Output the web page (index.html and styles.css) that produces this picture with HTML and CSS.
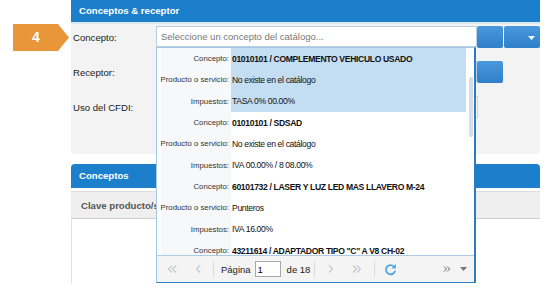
FILE: index.html
```html
<!DOCTYPE html>
<html lang="es">
<head>
  <meta charset="UTF-8" />
  <title>Conceptos y receptor</title>
  <link rel="stylesheet" href="styles.css">
</head>
<body>
  <div class="page">
    <div class="step-col">
      <div class="step">4</div>
    </div>

    <div class="main">
      <section class="panel">
        <div class="panel-head">Conceptos &amp; receptor</div>
        <div class="panel-body">
          <div class="form-row">
            <label class="form-label">Concepto:</label>
            <div class="field">
              <input class="field-input" type="text" placeholder="Seleccione un concepto del catálogo..." />

              <div class="picker">
                <div class="picker-list">
                  <div class="item selected">
                    <div class="lbl">Concepto:</div><div class="val strong">01010101 / COMPLEMENTO VEHICULO USADO</div>
                    <div class="lbl">Producto o servicio:</div><div class="val">No existe en el catálogo</div>
                    <div class="lbl">Impuestos:</div><div class="val">TASA 0% 00.00%</div>
                  </div>
                  <div class="item">
                    <div class="lbl">Concepto:</div><div class="val strong">01010101 / SDSAD</div>
                    <div class="lbl">Producto o servicio:</div><div class="val">No existe en el catálogo</div>
                    <div class="lbl">Impuestos:</div><div class="val">IVA 00.00% / 8 08.00%</div>
                  </div>
                  <div class="item">
                    <div class="lbl">Concepto:</div><div class="val strong">60101732 / LASER Y LUZ LED MAS LLAVERO M-24</div>
                    <div class="lbl">Producto o servicio:</div><div class="val">Punteros</div>
                    <div class="lbl">Impuestos:</div><div class="val">IVA 16.00%</div>
                  </div>
                  <div class="item">
                    <div class="lbl">Concepto:</div><div class="val strong">43211614 / ADAPTADOR TIPO "C" A V8 CH-02</div>
                  </div>
                  <div class="scroll-thumb"></div>
                </div>

                <div class="pager">
                  <span class="pg-btn">
                    <svg width="10" height="10" viewBox="0 0 10 10"><path d="M5 1.5 1.5 5 5 8.5M9 1.5 5.5 5 9 8.5" fill="none" stroke="#bcc6d0" stroke-width="1.1"/></svg>
                  </span>
                  <span class="pg-btn pg-prev">
                    <svg width="10" height="10" viewBox="0 0 10 10"><path d="M7 1.5 3.5 5 7 8.5" fill="none" stroke="#bcc6d0" stroke-width="1.1"/></svg>
                  </span>
                  <span class="pg-sep pg-sep-first"></span>
                  <span class="pg-text">Página</span>
                  <input class="pg-input" type="text" value="1" />
                  <span class="pg-text">de 18</span>
                  <span class="pg-sep pg-sep-mid"></span>
                  <span class="pg-btn pg-next">
                    <svg width="10" height="10" viewBox="0 0 10 10"><path d="M3 1.5 6.5 5 3 8.5" fill="none" stroke="#bcc6d0" stroke-width="1.1"/></svg>
                  </span>
                  <span class="pg-btn pg-last">
                    <svg width="10" height="10" viewBox="0 0 10 10"><path d="M1 1.5 4.5 5 1 8.5M5 1.5 8.5 5 5 8.5" fill="none" stroke="#bcc6d0" stroke-width="1.1"/></svg>
                  </span>
                  <span class="pg-sep pg-sep-end"></span>
                  <span class="pg-btn pg-refresh">
                    <svg width="13" height="13" viewBox="0 0 14 14"><path d="M11.2 4.3A5 5 0 1 0 12 8.2" fill="none" stroke="#4fa3e5" stroke-width="1.9"/><path d="M12.8 1.2v4.6H8.2z" fill="#4fa3e5"/></svg>
                  </span>
                  <span class="pg-more">
                    <svg width="8" height="8" viewBox="0 0 8 8"><path d="M1 1.5 3.5 4 1 6.5M4.2 1.5 6.7 4 4.2 6.5" fill="none" stroke="#666" stroke-width="1"/></svg>
                    <svg width="7" height="4" viewBox="0 0 7 4"><path d="M0 0h7L3.5 4z" fill="#777"/></svg>
                  </span>
                </div>
              </div>
            </div>
            <button class="trigger"></button>
            <button class="trigger trigger-wide">
              <svg width="7" height="4" viewBox="0 0 7 4"><path d="M0 0h7L3.5 4z" fill="#fff"/></svg>
            </button>
          </div>

          <div class="form-row">
            <label class="form-label">Receptor:</label>
            <div class="field"><input class="field-input" type="text" /></div>
            <button class="trigger"></button>
          </div>

          <div class="form-row">
            <label class="form-label">Uso del CFDI:</label>
            <div class="field field-plain"></div>
          </div>
        </div>
      </section>

      <section class="panel panel-grid">
        <div class="panel-head">Conceptos</div>
        <div class="grid-head">
          <span class="col-title">Clave producto/servicio</span>
        </div>
        <div class="grid-body"></div>
      </section>
    </div>
  </div>
</body>
</html>
```

FILE: styles.css
```css
* {
  box-sizing: border-box;
}
body {
  margin: 0;
  background: #fff;
  font-family: "Liberation Sans", Arial, sans-serif;
  color: #222;
}
.page {
  display: flex;
  width: 550px;
  height: 302px;
  overflow: hidden;
}
.step-col {
  width: 71px;
  flex: none;
  padding: 24px 0 0 13px;
}
.step {
  width: 56px;
  height: 27px;
  background: #e9963b;
  clip-path: polygon(0 0, 45px 0, 56px 50%, 45px 100%, 0 100%);
  color: #fff;
  font-weight: bold;
  font-size: 14px;
  line-height: 27px;
  padding-left: 19px;
}
.main {
  width: 469px;
  flex: none;
}
.panel-head {
  background: #1b7fcb;
  color: #fff;
  font-weight: bold;
  font-size: 9.6px;
  height: 22px;
  line-height: 22px;
  padding-left: 8px;
}
.panel-body {
  background: #f3f3f3;
  padding: 2px 0 36px 2px;
  border-top: 2px solid #dde8f2;
  border-radius: 0 0 4px 4px;
}
.form-row {
  display: flex;
  align-items: center;
  height: 22px;
}
.form-row + .form-row {
  margin-top: 13px;
}
.form-label {
  width: 83px;
  font-size: 9.6px;
  color: #222;
}
.field {
  position: relative;
  width: 321px;
  height: 22px;
}
.field-input {
  display: block;
  width: 100%;
  height: 21px;
  margin: 0;
  border: 1px solid #b8cee3;
  background: #fff;
  padding: 0 4px;
  font-family: "Liberation Sans", Arial, sans-serif;
  font-size: 9.5px;
  color: #222;
  outline: none;
}
.field-input::placeholder {
  color: #777;
}
.field-plain {
  width: 322px;
  border: 1px solid #d2d2d2;
  background: #fff;
}
.trigger {
  width: 26px;
  height: 22px;
  padding: 0;
  border: 0;
  border-radius: 2px;
  background: linear-gradient(#4a98dd, #2f80c8);
}
.trigger-wide {
  width: 36px;
  margin-left: 1px;
  text-align: right;
  padding-right: 5px;
}
.trigger-wide svg {
  display: inline-block;
  vertical-align: middle;
}

/* dropdown of the concept combo */
.picker {
  position: absolute;
  left: 0;
  top: 21px;
  z-index: 2;
  width: 320px;
  height: 236px;
  display: flex;
  flex-direction: column;
  background: #fff;
  border: 1px solid #a6c7e6;
  border-right: 2px solid #2b7cc6;
  border-bottom-color: #2f80c8;
}
.picker-list {
  position: relative;
  height: 207px;
  overflow: hidden;
  padding: 0 8px 0 4px;
}
.item {
  display: grid;
  grid-template-columns: 70px 1fr;
  grid-auto-rows: 21.33px;
}
.lbl {
  display: flex;
  align-items: center;
  justify-content: flex-end;
  padding-right: 2px;
  font-size: 7.8px;
  color: #333;
  background: #f7f8fa;
  white-space: nowrap;
}
.val {
  display: flex;
  align-items: center;
  padding-left: 1px;
  font-size: 8.6px;
  letter-spacing: -0.35px;
  color: #111;
  white-space: nowrap;
  overflow: hidden;
}
.val.strong {
  font-weight: bold;
}
.item.selected .val {
  background: #c3def2;
}
.scroll-thumb {
  position: absolute;
  right: 1px;
  top: 29px;
  width: 4px;
  height: 60px;
  border-radius: 2px;
  background: #d3dde7;
}
.pager {
  flex: 1;
  display: flex;
  align-items: center;
  padding-left: 4px;
  background: #f4f4f4;
  border-top: 1px solid #b0cbe6;
  font-size: 9.5px;
  color: #222;
}
.pg-btn {
  width: 22px;
  flex: none;
  display: flex;
  justify-content: center;
}
.pg-prev {
  margin-left: 4px;
}
.pg-next {
  margin-left: 5px;
}
.pg-last,
.pg-refresh {
  margin-left: 4px;
}
.pg-sep {
  width: 1px;
  height: 16px;
  flex: none;
  background: #dadada;
}
.pg-sep-first {
  margin: 0 7px 0 4px;
}
.pg-sep-mid {
  margin-left: 4px;
}
.pg-sep-end {
  margin-left: 6px;
}
.pg-input {
  width: 26px;
  height: 16px;
  flex: none;
  margin: 0 6px 0 4px;
  padding: 0 2px;
  border: 1px solid #a9a9a9;
  background: #fff;
  font-family: "Liberation Sans", Arial, sans-serif;
  font-size: 9.5px;
}
.pg-more {
  margin-left: auto;
  margin-right: 7px;
  display: flex;
  align-items: center;
  gap: 9px;
}

/* grid panel */
.panel-grid {
  margin-top: 10px;
}
.panel-grid .panel-head {
  height: 24px;
  line-height: 24px;
  border-radius: 4px 4px 0 0;
}
.grid-head {
  margin-top: 3px;
  height: 28px;
  display: flex;
  align-items: center;
  background: #efefef;
  border-top: 1px solid #dcdcdc;
  border-bottom: 1px solid #d0d0d0;
}
.col-title {
  width: 85px;
  padding-left: 10px;
  overflow: hidden;
  font-size: 9.6px;
  font-weight: bold;
  color: #555;
  white-space: nowrap;
}
.grid-body {
  height: 65px;
  border-left: 1px solid #e2e2e2;
}
```
